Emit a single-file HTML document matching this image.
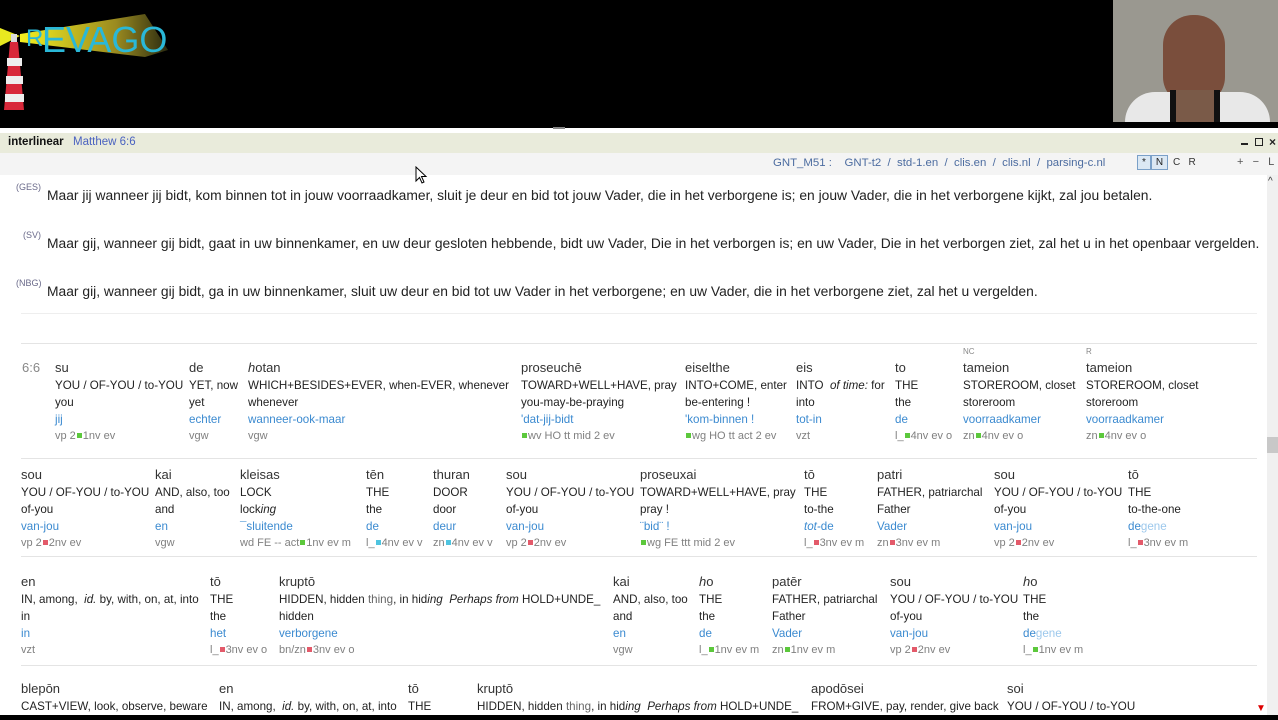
<!DOCTYPE html>
<html><head><meta charset="utf-8">
<style>
*{margin:0;padding:0;box-sizing:border-box}
body{width:1278px;height:720px;overflow:hidden;background:#fff;font-family:"Liberation Sans",sans-serif;position:relative;color:#222}
.a{position:absolute;white-space:nowrap}
.c{position:absolute;white-space:nowrap;font-size:11.6px;line-height:17px;color:#222}
.c div{height:17px}
.c div.g{height:18px}
.g{font-size:13px;color:#333}
.b{color:#3b8ad0}
.p{color:#808080;font-size:11px}
.sq{display:inline-block;width:5px;height:5px;margin:0 1px;vertical-align:1px}
.gr{background:#5cc83c}.rd{background:#e35a6a}.cy{background:#4fc4e0}
.sep{position:absolute;left:21px;width:1236px;height:1px;background:#e4e4e4}
.tr{position:absolute;font-size:13.85px;color:#222;white-space:nowrap}
.tr sup{font-size:9px;color:#6a6a8a;position:absolute;left:-30px;top:-5px}
</style></head><body>
<div class="a" style="left:0;top:0;width:1278px;height:128px;background:#000"></div>
<svg class="a" style="left:0;top:0" width="180" height="120">
<defs><linearGradient id="bm" x1="0" x2="1"><stop offset="0" stop-color="#f4f020"/><stop offset="0.65" stop-color="#9a8a20"/><stop offset="1" stop-color="#2a2a10"/></linearGradient></defs>
<polygon points="0,28 20,36 0,46" fill="#e8e820"/>
<polygon points="20,34 145,14 168,50 145,57 20,42" fill="url(#bm)"/>
<text x="26" y="46" font-family="Liberation Sans" font-size="24" fill="#2ab8d8">R</text>
<text x="42" y="52" font-family="Liberation Sans" font-size="36" fill="#2ab8d8">EVAGO</text>
<polygon points="10,42 18,42 24,110 4,110" fill="#d8283a"/>
<rect x="7" y="58" width="15" height="8" fill="#eee"/><rect x="6" y="76" width="17" height="8" fill="#eee"/><rect x="5" y="94" width="19" height="8" fill="#eee"/>
<rect x="11" y="34" width="6" height="8" fill="#ddd"/>
</svg>
<div class="a" style="left:1113px;top:0;width:165px;height:122px;background:#9a9890"></div>
<div class="a" style="left:1163px;top:15px;width:62px;height:90px;border-radius:30px 30px 28px 28px;background:#7a4e3c"></div>
<div class="a" style="left:1125px;top:92px;width:145px;height:30px;border-radius:40px 40px 0 0;background:#e8e8e8"></div>
<div class="a" style="left:1170px;top:90px;width:50px;height:32px;background:#7a5a48;border-left:6px solid #111;border-right:6px solid #111"></div>
<div class="a" style="left:553px;top:127px;width:12px;height:2px;background:#888"></div>
<div class="a" style="left:0;top:133px;width:1278px;height:20px;background:#e9ebdb"></div>
<div class="a" style="left:8px;top:136px;font-size:11.5px;font-weight:bold;color:#111">interlinear</div>
<div class="a" style="left:73px;top:136px;font-size:11.5px;color:#4a62c0">Matthew 6:6</div>
<div class="a" style="left:1241px;top:143px;width:7px;height:2px;background:#222"></div>
<div class="a" style="left:1255px;top:138px;width:8px;height:8px;border:1px solid #222"></div>
<div class="a" style="left:1269px;top:135px;font-size:12px;font-weight:bold;color:#222">×</div>
<div class="a" style="left:0;top:153px;width:1278px;height:22px;background:#f4f4f4"></div>
<div class="a" style="left:773px;top:157px;font-size:11.4px;color:#4c6ca0">GNT_M51 : &nbsp;&nbsp; GNT-t2 &nbsp;/&nbsp; std-1.en &nbsp;/&nbsp; clis.en &nbsp;/&nbsp; clis.nl &nbsp;/&nbsp; parsing-c.nl</div>
<div class="a" style="left:1137px;top:155px;width:14px;height:15px;border:1px solid #7aa0c8;background:#dbe8f4;font-size:10px;text-align:center;line-height:13px">*</div>
<div class="a" style="left:1151px;top:155px;width:17px;height:15px;border:1px solid #7aa0c8;background:#dbe8f4;font-size:10px;text-align:center;line-height:13px">N</div>
<div class="a" style="left:1173px;top:157px;font-size:10px;color:#333">C &nbsp;&nbsp;R</div>
<div class="a" style="left:1237px;top:156px;font-size:11px;color:#555">+ &nbsp;&nbsp;− &nbsp;&nbsp;L</div>
<div class="a" style="left:1267px;top:175px;width:11px;height:540px;background:#f0f0f0"></div>
<div class="a" style="left:1268px;top:176px;font-size:10px;color:#333">^</div>
<div class="a" style="left:1267px;top:437px;width:11px;height:16px;background:#c8c8c8"></div>
<div class="a" style="left:1256px;top:703px;font-size:10px;color:#d00">▼</div>
<div class="a" style="left:0;top:715px;width:1278px;height:5px;background:#000"></div>
<svg class="a" style="left:415px;top:166px" width="14" height="20"><path d="M1 1 L1 15 L4.5 11.5 L7 17 L9 16 L6.5 10.5 L11 10.5 Z" fill="#fff" stroke="#000"/></svg>
<div class="tr" style="left:47px;top:187px"><sup style="left:-31px">(GES)</sup>Maar jij wanneer jij bidt, kom binnen tot in jouw voorraadkamer, sluit je deur en bid tot jouw Vader, die in het verborgene is; en jouw Vader, die in het verborgene kijkt, zal jou betalen.</div>
<div class="tr" style="left:47px;top:235px"><sup style="left:-24px">(SV)</sup>Maar gij, wanneer gij bidt, gaat in uw binnenkamer, en uw deur gesloten hebbende, bidt uw Vader, Die in het verborgen is; en uw Vader, Die in het verborgen ziet, zal het u in het openbaar vergelden.</div>
<div class="tr" style="left:47px;top:283px"><sup style="left:-31px">(NBG)</sup>Maar gij, wanneer gij bidt, ga in uw binnenkamer, sluit uw deur en bid tot uw Vader in het verborgene; en uw Vader, die in het verborgene ziet, zal het u vergelden.</div>
<div class="sep" style="top:313px;background:#eee"></div>
<div class="sep" style="top:343px"></div>
<div class="sep" style="top:458px"></div>
<div class="sep" style="top:556px"></div>
<div class="sep" style="top:665px"></div>
<div class="a" style="left:963px;top:347px;font-size:8px;color:#888">NC</div>
<div class="a" style="left:1086px;top:347px;font-size:8px;color:#888">R</div>
<div class="c" style="left:22px;top:359px"><div class="g" style="color:#888">6:6</div></div>
<div class="c" style="left:55px;top:359px"><div class="g">su</div><div>YOU / OF-YOU / to-YOU</div><div>you</div><div class="b">jij</div><div class="p">vp 2<span class="sq gr"></span>1nv ev</div></div>
<div class="c" style="left:189px;top:359px"><div class="g">de</div><div>YET, now</div><div>yet</div><div class="b">echter</div><div class="p">vgw</div></div>
<div class="c" style="left:248px;top:359px"><div class="g"><i>h</i>otan</div><div>WHICH+BESIDES+EVER, when-EVER, whenever</div><div>whenever</div><div class="b">wanneer-ook-maar</div><div class="p">vgw</div></div>
<div class="c" style="left:521px;top:359px"><div class="g">proseuchē</div><div>TOWARD+WELL+HAVE, pray</div><div>you-may-be-praying</div><div class="b">'dat-jij-bidt</div><div class="p"><span class="sq gr"></span>wv HO tt mid 2 ev</div></div>
<div class="c" style="left:685px;top:359px"><div class="g">eiselthe</div><div>INTO+COME, enter</div><div>be-entering !</div><div class="b">'kom-binnen !</div><div class="p"><span class="sq gr"></span>wg HO tt act 2 ev</div></div>
<div class="c" style="left:796px;top:359px"><div class="g">eis</div><div>INTO &nbsp;<i>of time:</i> for</div><div>into</div><div class="b">tot-in</div><div class="p">vzt</div></div>
<div class="c" style="left:895px;top:359px"><div class="g">to</div><div>THE</div><div>the</div><div class="b">de</div><div class="p">l_<span class="sq gr"></span>4nv ev o</div></div>
<div class="c" style="left:963px;top:359px"><div class="g">tameion</div><div>STOREROOM, closet</div><div>storeroom</div><div class="b">voorraadkamer</div><div class="p">zn<span class="sq gr"></span>4nv ev o</div></div>
<div class="c" style="left:1086px;top:359px"><div class="g">tameion</div><div>STOREROOM, closet</div><div>storeroom</div><div class="b">voorraadkamer</div><div class="p">zn<span class="sq gr"></span>4nv ev o</div></div>
<div class="c" style="left:21px;top:466px"><div class="g">sou</div><div>YOU / OF-YOU / to-YOU</div><div>of-you</div><div class="b">van-jou</div><div class="p">vp 2<span class="sq rd"></span>2nv ev</div></div>
<div class="c" style="left:155px;top:466px"><div class="g">kai</div><div>AND, also, too</div><div>and</div><div class="b">en</div><div class="p">vgw</div></div>
<div class="c" style="left:240px;top:466px"><div class="g">kleisas</div><div>LOCK</div><div>lock<i>ing</i></div><div class="b">¯sluitende</div><div class="p">wd FE -- act<span class="sq gr"></span>1nv ev m</div></div>
<div class="c" style="left:366px;top:466px"><div class="g">tēn</div><div>THE</div><div>the</div><div class="b">de</div><div class="p">l_<span class="sq cy"></span>4nv ev v</div></div>
<div class="c" style="left:433px;top:466px"><div class="g">thuran</div><div>DOOR</div><div>door</div><div class="b">deur</div><div class="p">zn<span class="sq cy"></span>4nv ev v</div></div>
<div class="c" style="left:506px;top:466px"><div class="g">sou</div><div>YOU / OF-YOU / to-YOU</div><div>of-you</div><div class="b">van-jou</div><div class="p">vp 2<span class="sq rd"></span>2nv ev</div></div>
<div class="c" style="left:640px;top:466px"><div class="g">proseuxai</div><div>TOWARD+WELL+HAVE, pray</div><div>pray !</div><div class="b">¨bid¨ !</div><div class="p"><span class="sq gr"></span>wg FE ttt mid 2 ev</div></div>
<div class="c" style="left:804px;top:466px"><div class="g">tō</div><div>THE</div><div>to-the</div><div class="b"><i>tot-</i>de</div><div class="p">l_<span class="sq rd"></span>3nv ev m</div></div>
<div class="c" style="left:877px;top:466px"><div class="g">patri</div><div>FATHER, patriarchal</div><div>Father</div><div class="b">Vader</div><div class="p">zn<span class="sq rd"></span>3nv ev m</div></div>
<div class="c" style="left:994px;top:466px"><div class="g">sou</div><div>YOU / OF-YOU / to-YOU</div><div>of-you</div><div class="b">van-jou</div><div class="p">vp 2<span class="sq rd"></span>2nv ev</div></div>
<div class="c" style="left:1128px;top:466px"><div class="g">tō</div><div>THE</div><div>to-the-one</div><div class="b">de<span style="color:#9cc8ec">gene</span></div><div class="p">l_<span class="sq rd"></span>3nv ev m</div></div>
<div class="c" style="left:21px;top:573px"><div class="g">en</div><div>IN, among, &nbsp;<i>id.</i> by, with, on, at, into</div><div>in</div><div class="b">in</div><div class="p">vzt</div></div>
<div class="c" style="left:210px;top:573px"><div class="g">tō</div><div>THE</div><div>the</div><div class="b">het</div><div class="p">l_<span class="sq rd"></span>3nv ev o</div></div>
<div class="c" style="left:279px;top:573px"><div class="g">kruptō</div><div>HIDDEN, hidden <span style="color:#666">thing</span>, in hid<i>ing</i> &nbsp;<i>Perhaps from</i> HOLD+UNDE_</div><div>hidden</div><div class="b">verborgene</div><div class="p">bn/zn<span class="sq rd"></span>3nv ev o</div></div>
<div class="c" style="left:613px;top:573px"><div class="g">kai</div><div>AND, also, too</div><div>and</div><div class="b">en</div><div class="p">vgw</div></div>
<div class="c" style="left:699px;top:573px"><div class="g"><i>h</i>o</div><div>THE</div><div>the</div><div class="b">de</div><div class="p">l_<span class="sq gr"></span>1nv ev m</div></div>
<div class="c" style="left:772px;top:573px"><div class="g">patēr</div><div>FATHER, patriarchal</div><div>Father</div><div class="b">Vader</div><div class="p">zn<span class="sq gr"></span>1nv ev m</div></div>
<div class="c" style="left:890px;top:573px"><div class="g">sou</div><div>YOU / OF-YOU / to-YOU</div><div>of-you</div><div class="b">van-jou</div><div class="p">vp 2<span class="sq rd"></span>2nv ev</div></div>
<div class="c" style="left:1023px;top:573px"><div class="g"><i>h</i>o</div><div>THE</div><div>the</div><div class="b">de<span style="color:#9cc8ec">gene</span></div><div class="p">l_<span class="sq gr"></span>1nv ev m</div></div>
<div class="c" style="left:21px;top:680px"><div class="g">blepōn</div><div>CAST+VIEW, look, observe, beware</div></div>
<div class="c" style="left:219px;top:680px"><div class="g">en</div><div>IN, among, &nbsp;<i>id.</i> by, with, on, at, into</div></div>
<div class="c" style="left:408px;top:680px"><div class="g">tō</div><div>THE</div></div>
<div class="c" style="left:477px;top:680px"><div class="g">kruptō</div><div>HIDDEN, hidden <span style="color:#666">thing</span>, in hid<i>ing</i> &nbsp;<i>Perhaps from</i> HOLD+UNDE_</div></div>
<div class="c" style="left:811px;top:680px"><div class="g">apodōsei</div><div>FROM+GIVE, pay, render, give back</div></div>
<div class="c" style="left:1007px;top:680px"><div class="g">soi</div><div>YOU / OF-YOU / to-YOU</div></div>
</body></html>
